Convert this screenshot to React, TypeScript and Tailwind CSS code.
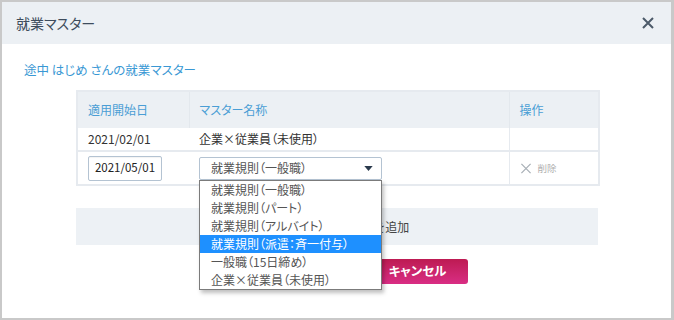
import React from "react";

const font = {
  fontFamily: '"Noto Sans CJK JP", "Noto Sans", sans-serif',
};

const options = [
  "就業規則（一般職）",
  "就業規則（パート）",
  "就業規則（アルバイト）",
  "就業規則（派遣：斉一付与）",
  "一般職（15日締め）",
  "企業×従業員（未使用）",
];

const CloseIcon = ({ className }: { className?: string }) => (
  <svg viewBox="0 0 12 12" className={className} fill="none" stroke="currentColor">
    <path d="M1 1 L11 11 M11 1 L1 11" />
  </svg>
);

export default function App() {
  return (
    <div
      className="w-[674px] h-[320px] bg-[#c9c9c9] pl-[2px] pt-[2px] pr-[3px] pb-[2px] [font-feature-settings:'palt']"
      style={font}
    >
      <div className="w-full h-full bg-white flex flex-col">
        {/* header */}
        <div className="h-[42px] bg-[#ecf0f4] flex items-center justify-between pl-[14px] pr-[17px] shrink-0">
          <span className="text-[14px] text-[#3e4c5c]">就業マスター</span>
          <CloseIcon className="w-[12px] h-[12px] text-[#4c5a69] [stroke-width:2]" />
        </div>

        <div className="pt-[16px] pl-[22px]">
          <h2 className="text-[12.5px] text-[#3a98d4] leading-[20px]">途中 はじめ さんの就業マスター</h2>
        </div>

        <div className="pl-[74px] pt-[10px]">
          <table className="w-[522px] border-collapse border-2 border-[#e6eaef] text-[12px] text-[#333] table-fixed">
            <colgroup>
              <col className="w-[112px]" />
              <col className="w-[320px]" />
              <col className="w-[90px]" />
            </colgroup>
            <thead>
              <tr className="h-[37px] bg-[#ecf0f4] text-[#4a9ed5] text-left">
                <th className="font-normal pl-[10px] border-r border-[#e3e8ed]">適用開始日</th>
                <th className="font-normal pl-[10px] border-r border-[#e3e8ed]">マスター名称</th>
                <th className="font-normal pl-[10px]">操作</th>
              </tr>
            </thead>
            <tbody>
              <tr className="h-[23px] border-b-2 border-[#e6eaef]">
                <td className="pl-[10px]">2021/02/01</td>
                <td className="pl-[10px]">企業×従業員（未使用）</td>
                <td className="border-l border-[#e6eaef]"></td>
              </tr>
              <tr className="h-[34px]">
                <td className="pl-[10px]">
                  <div className="w-[74px] h-[25px] border border-[#b4c3d2] rounded-[2px] flex items-center justify-center text-[11.5px] text-[#222] shadow-[inset_0_1px_1px_rgba(0,0,0,0.05)]">
                    2021/05/01
                  </div>
                </td>
                <td className="pl-[10px]">
                  <div className="relative w-[183px]">
                    <div className="h-[23px] border border-[#b4c3d2] rounded-[2px] flex items-center justify-between pl-[11px] pr-[8px] text-[#555]">
                      <span>就業規則（一般職）</span>
                      <svg viewBox="0 0 10 6" className="w-[9px] h-[5px]">
                        <path d="M0 0 H10 L5 6 Z" fill="#2a3a4c" />
                      </svg>
                    </div>
                    <ul className="absolute left-0 top-[23px] w-[183px] bg-white border border-[#7b7b7b] shadow-[2px_3px_4px_rgba(0,0,0,0.25)] z-10">
                      {options.map((o, i) => (
                        <li
                          key={o}
                          className={
                            i === 3
                              ? "h-[18px] leading-[18px] pl-[11px] bg-[#1e90ff] text-white"
                              : "h-[18px] leading-[18px] pl-[11px] text-[#555]"
                          }
                        >
                          {o}
                        </li>
                      ))}
                    </ul>
                  </div>
                </td>
                <td className="pl-[10px] border-l border-[#e6eaef]">
                  <div className="flex items-center gap-[6px]">
                    <CloseIcon className="w-[12px] h-[11px] text-[#a7aeb5] [stroke-width:1.3]" />
                    <span className="text-[9.5px] text-[#b0b0b0]">削除</span>
                  </div>
                </td>
              </tr>
            </tbody>
          </table>

          <div className="mt-[22px] w-[522px] h-[37px] bg-[#edf1f5] flex items-center justify-center pl-[22px] text-[12px] text-[#444] [font-feature-settings:normal]">
            ＋ 就業マスターを追加
          </div>

          <div className="mt-[14px] w-[522px] flex justify-end pr-[130px]">
            <button className="w-[101px] h-[25px] rounded-[3px] bg-gradient-to-b from-[#bd1a52] to-[#d92d84] text-white text-[12.5px] font-bold">
              キャンセル
            </button>
          </div>
        </div>
      </div>
    </div>
  );
}
